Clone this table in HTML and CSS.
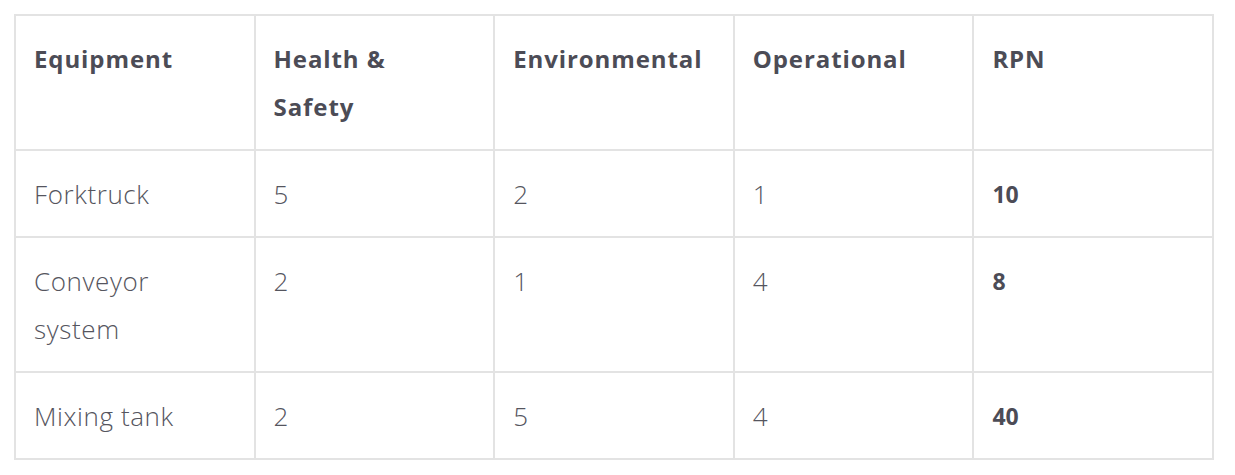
FILE: index.html
```html
<!DOCTYPE html>
<html>
<head>
<meta charset="utf-8">
<link rel="stylesheet" href="styles.css">
</head>
<body>
<div class="wrap">
<table class="risk">
  <thead>
    <tr><th>Equipment</th><th>Health &amp; Safety</th><th>Environmental</th><th>Operational</th><th>RPN</th></tr>
  </thead>
  <tbody>
    <tr><td>Forktruck</td><td>5</td><td>2</td><td>1</td><td class="rpn">10</td></tr>
    <tr><td>Conveyor system</td><td>2</td><td>1</td><td>4</td><td class="rpn">8</td></tr>
    <tr><td>Mixing tank</td><td>2</td><td>5</td><td>4</td><td class="rpn">40</td></tr>
  </tbody>
</table>
</div>
</body>
</html>
```

FILE: styles.css
```css
html, body { margin: 0; padding: 0; background: #fff; }
.wrap { padding: 14px 0 0 14px; }
.risk {
  width: 1200px;
  table-layout: fixed;
  border-collapse: collapse;
  font-family: "Open Sans", Lato, sans-serif;
  color: #4c4c56;
}
.risk th, .risk td {
  width: 20%;
  border: 2px solid #e3e3e3;
  padding: 19px 24px 18px 18px;
  line-height: 48px;
  text-align: left;
  vertical-align: top;
}
.risk th { font-size: 24px; font-weight: 700; letter-spacing: 0.9px; }
.risk td { font-size: 26px; font-weight: 300; color: #55555e; letter-spacing: 0.6px; }
.risk td.rpn { font-weight: 700; font-size: 23px; color: #4c4c56; letter-spacing: 0; }
```
